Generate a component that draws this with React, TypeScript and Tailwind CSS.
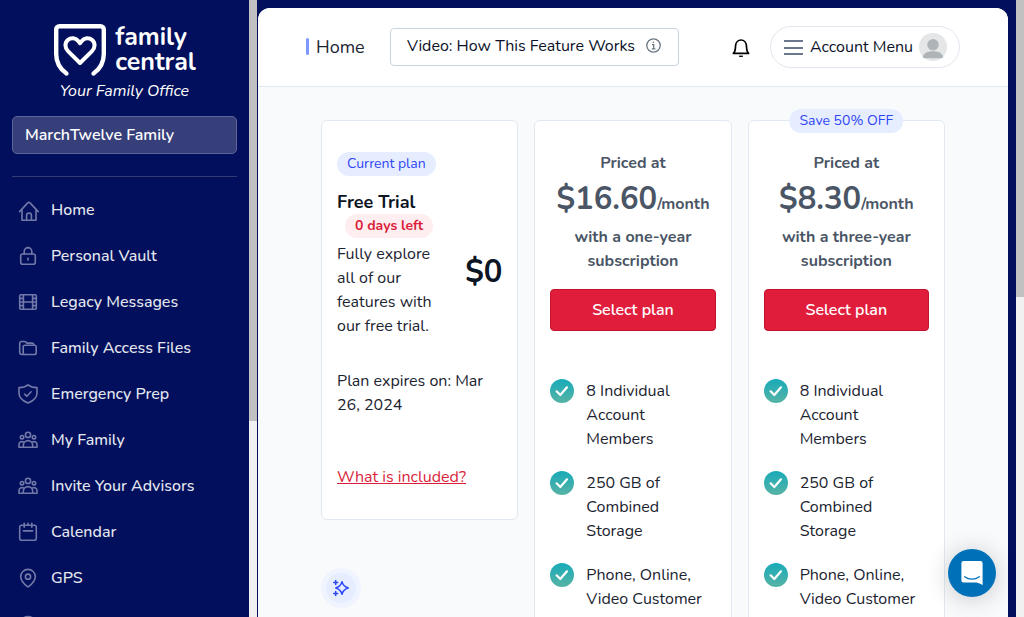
import type { ReactNode } from "react";

const navIcons: Record<string, ReactNode> = {
  home: (
    <>
      <path d="M1.6 11.6 10 2.6a1.2 1.2 0 0 1 1.8 0l8.4 9" />
      <path d="M4 10v10.3h14V10" />
      <path d="M8.6 20v-4.6a2.4 2.4 0 0 1 4.8 0V20" />
    </>
  ),
  lock: (
    <>
      <rect x="2.7" y="8" width="14.6" height="10.3" rx="2" />
      <path d="M6.2 8V5.4a3.8 3.8 0 0 1 7.6 0V8" />
      <path d="M10 12.3v1.8" />
    </>
  ),
  film: (
    <>
      <rect x="1.7" y="2.7" width="16.6" height="14.6" rx="1.2" />
      <path d="M5.4 2.7v14.6M14.6 2.7v14.6M5.4 10h9.2M1.7 6.4h3.7M1.7 10h3.7M1.7 13.6h3.7M14.6 6.4h3.7M14.6 10h3.7M14.6 13.6h3.7" />
    </>
  ),
  folder: (
    <>
      <rect x="5.2" y="7.2" width="13" height="9.3" rx="1.8" />
      <path d="M5.4 16.5H3.6a1.9 1.9 0 0 1-1.9-1.9V5.2a1.7 1.7 0 0 1 1.7-1.7h3.2c.6 0 1 .2 1.4.6l.9 1h5.4c.9 0 1.5.6 1.7 1.9" />
    </>
  ),
  shield: (
    <>
      <path d="M10 .9c2.4 1.9 5.2 2.7 9 2.7v5.6c0 4.8-4 7.8-9 9.9-5-2.1-9-5.1-9-9.9V3.6c3.800 0 6.600-.8 9-2.700Z" />
      <path d="m6.600 10.200 2.300 2.100 4.200-4.500" />
    </>
  ),
  people: (
    <>
      <circle cx="10" cy="4.900" r="2.600" />
      <circle cx="4" cy="7.200" r="1.700" />
      <circle cx="16" cy="7.200" r="1.700" />
      <path d="M5.300 17.200v-1.900a4.700 4.700 0 0 1 9.400 0v1.900Z" />
      <path d="M5.300 17.200H1v-2.600c0-2 1.800-3.500 4.700-2.700M14.700 17.200H19v-2.600c0-2-1.800-3.500-4.700-2.700" />
    </>
  ),
  calendar: (
    <>
      <rect x="1.700" y="3.300" width="16.600" height="15" rx="2" />
      <path d="M6.200 1.300v4M13.800 1.300v4M10 1.300v2M5.400 8.900h9.200" />
    </>
  ),
  pin: (
    <>
      <path d="M10 18.900c-1.800-1.300-7.300-5.100-7.300-10.200a7.300 7.300 0 0 1 14.600 0c0 5.100-5.500 8.900-7.300 10.200Z" />
      <circle cx="10" cy="8.700" r="2.600" />
    </>
  ),
  clock: <circle cx="10" cy="10.500" r="8" />,
};

const navItems = [
  { label: "Home", icon: "home" },
  { label: "Personal Vault", icon: "lock" },
  { label: "Legacy Messages", icon: "film" },
  { label: "Family Access Files", icon: "folder" },
  { label: "Emergency Prep", icon: "shield" },
  { label: "My Family", icon: "people" },
  { label: "Invite Your Advisors", icon: "people" },
  { label: "Calendar", icon: "calendar" },
  { label: "GPS", icon: "pin" },
  { label: "", icon: "clock" },
];

const features = [
  "8 Individual Account Members",
  "250 GB of Combined Storage",
  "Phone, Online, Video Customer Support",
];

const plans = [
  { price: "$16.60", term: "with a one-year subscription", badge: "" },
  { price: "$8.30", term: "with a three-year subscription", badge: "Save 50% OFF" },
];

function Logo() {
  return (
    <div className="flex flex-col items-center pt-[23px] text-white">
      <div className="flex gap-2">
        <svg width="54" height="54" viewBox="0 0 54 54" fill="none" stroke="currentColor" strokeWidth="4.400" strokeLinecap="round" strokeLinejoin="round">
          <path d="M13.500 50.500C7 46 3.200 39.500 3.200 31V6.500a3.300 3.300 0 0 1 3.300-3.300h41a3.300 3.300 0 0 1 3.300 3.300V31c0 8.500-3.800 15-10.300 19.500" />
          <path d="M27 40 15.200 28.400c-3.700-3.700-3.500-8.600-.4-11.400 3.200-2.800 7.700-2.300 10.200.8l2 2.400 2-2.400c2.500-3.100 7-3.600 10.200-.8 3.100 2.800 3.300 7.700-.4 11.400Z" strokeWidth="4" />
        </svg>
        <div className="flex flex-col pt-[2px] text-[25px] leading-[25px] font-bold">
          <span>family</span>
          <span>central</span>
        </div>
      </div>
      <span className="mt-0.5 text-base leading-6 italic">Your Family Office</span>
    </div>
  );
}

function Sidebar() {
  return (
    <aside className="flex min-w-0 flex-1 flex-col overflow-hidden px-3">
      <Logo />
      <button type="button" className="mt-[13px] h-[38px] shrink-0 rounded-[5px] border border-[#5d6497] bg-[#373f7b] px-3 text-left text-base font-semibold text-white">
        MarchTwelve Family
      </button>
      <nav className="mt-[22px] border-t border-[#343c77] pt-[10px]">
        {navItems.map((item) => (
          <a key={item.label} href="#" aria-label={item.label || "More"} className="flex h-[46px] items-center gap-[13px] pl-1.5 text-base font-medium text-[#e4e7ef]">
            <svg className="size-5 shrink-0 overflow-visible text-[#7279a8]" viewBox="0 0 20 20" fill="none" stroke="currentColor" strokeWidth="1.600" strokeLinecap="round" strokeLinejoin="round">
              {navIcons[item.icon]}
            </svg>
            {item.label}
          </a>
        ))}
      </nav>
    </aside>
  );
}

function Header() {
  return (
    <header className="flex h-[79px] shrink-0 items-center border-b border-[#e2e8f0] bg-white pr-12 pb-px pl-12">
      <div className="flex items-center gap-[7px]">
        <span className="h-[17px] w-[3px] rounded-sm bg-[#7c98ff]" />
        <h1 className="w-[49px] text-lg leading-6 whitespace-nowrap text-[#1b2430]">Home</h1>
      </div>
      <button type="button" className="ml-[25px] flex h-[38px] w-[289px] items-center justify-between rounded border border-[#cbd3e1] pr-[17px] pb-0.5 pl-4 text-base whitespace-nowrap text-[#0a1128]">
        Video: How This Feature Works
        <svg className="size-[15px]" viewBox="0 0 15 15" fill="none" stroke="#6b7684" strokeWidth="1.300">
          <circle cx="7.500" cy="7.500" r="6.700" />
          <path d="M6 6.700h1.700v4M5.800 10.900h3.600" />
          <circle cx="7.300" cy="4.200" r=".5" fill="#6b7684" strokeWidth=".6" />
        </svg>
      </button>
      <button type="button" aria-label="Notifications" className="ml-auto">
        <svg className="h-5 w-[18px]" viewBox="0 0 18 20" fill="none" stroke="#000" strokeWidth="1.700" strokeLinejoin="round">
          <path d="M1.400 16.400c1.200-1 1.700-2.200 1.900-4.200l.3-3.900C3.900 5.300 6.100 3 9 3s5.100 2.300 5.400 5.300l.3 3.900c.2 2 .7 3.200 1.900 4.200Z" />
          <path d="M7.300 19.100c.8 1.300 2.600 1.300 3.400 0Z" fill="#000" strokeWidth="1" />
        </svg>
      </button>
      <button type="button" className="ml-5 flex h-[42px] w-[190px] items-center rounded-full border border-[#e2e6ef] pr-3 pl-[13px] text-base whitespace-nowrap text-[#0a1128]">
        <svg className="h-4 w-[19px]" viewBox="0 0 19 16" stroke="#6b778c" strokeWidth="2">
          <path d="M0 2h19M0 9h19M0 15h19" />
        </svg>
        <span className="ml-[7px]">Account Menu</span>
        <svg className="ml-auto size-7" viewBox="0 0 28 28">
          <circle cx="14" cy="14" r="14" fill="#e4e6e7" />
          <circle cx="14" cy="11.700" r="5.700" fill="#aeb4b7" />
          <path d="M3.800 24.200c.6-3.900 4.200-6 10.200-6s9.600 2.100 10.200 6c-1 .8-1.600 1-2.400 1H6.200c-.8 0-1.400-.2-2.400-1Z" fill="#aeb4b7" />
        </svg>
      </button>
    </header>
  );
}

function FreeTrialCard() {
  return (
    <section className="rounded-md border border-[#e2e8f0] bg-white px-[15px] pt-[31px] pb-[30px] text-base text-[#1b2430]">
      <span className="flex h-6 w-fit items-center rounded-full bg-[#e6edff] px-2.5 text-sm text-[#2f46f5]">Current plan</span>
      <div className="mt-[14px] flex items-center justify-between">
        <div className="w-[110px]">
          <h2 className="text-lg leading-6 font-bold text-[#0b1523]">Free Trial</h2>
          <span className="ml-2 flex h-6 w-fit items-center rounded-full bg-[#ffeef0] px-2.5 text-sm font-bold text-[#d91f3c]">0 days left</span>
          <p className="mt-1">Fully explore all of our features with our free trial.</p>
        </div>
        <span className="pt-4 text-[31px] leading-9 font-bold text-[#0b1523]">$0</span>
      </div>
      <p className="mt-[31px]">Plan expires on: Mar 26, 2024</p>
      <a href="#" className="mt-12 block text-[#d91f3c] underline">What is included?</a>
    </section>
  );
}

function CheckIcon() {
  return (
    <svg className="size-6 shrink-0" viewBox="0 0 24 24" fill="none">
      <defs>
        <linearGradient id="teal" x1="0" y1="0" x2="0" y2="1">
          <stop offset="0" stopColor="#18aab8" />
          <stop offset="1" stopColor="#57b3a6" />
        </linearGradient>
      </defs>
      <circle cx="12" cy="12" r="12" fill="url(#teal)" />
      <path d="m6.600 12.300 3.700 3.700 6.700-7.700" stroke="#fff" strokeWidth="2.200" strokeLinecap="round" strokeLinejoin="round" />
    </svg>
  );
}

function PlanCard({ price, term, badge }: { price: string; term: string; badge: string }) {
  return (
    <section className="relative rounded-md border border-[#e2e8f0] bg-white px-[15px] pt-[30px] pb-8">
      {badge && (
        <span className="absolute -top-3 left-1/2 flex h-6 -translate-x-1/2 items-center rounded-full bg-[#e6edff] px-2.5 text-sm whitespace-nowrap text-[#2f46f5]">
          {badge}
        </span>
      )}
      <div className="text-center text-base font-bold text-[#4a5565]">
        <p>Priced at</p>
        <p className="text-[31px] leading-[48px] whitespace-nowrap">
          {price}
          <span className="text-base leading-6">/month</span>
        </p>
        <p className="mt-0.5">{term}</p>
      </div>
      <button type="button" className="mt-4 h-[42px] w-full rounded border border-[#c3142f] bg-[#e11d3c] text-base font-semibold text-white">
        Select plan
      </button>
      <ul className="mt-12 flex flex-col gap-5">
        {features.map((feature) => (
          <li key={feature} className="flex gap-3 text-base text-[#1b2430]">
            <CheckIcon />
            <span>{feature}</span>
          </li>
        ))}
      </ul>
    </section>
  );
}

export default function App() {
  return (
    <div className="flex h-screen overflow-hidden bg-[#020f5c] font-['Nunito','Lato',sans-serif]">
      <div className="flex w-[257px] shrink-0">
        <Sidebar />
        <div className="w-2 bg-[#f1f1f1]">
          <div className="h-[421px] bg-[#c1c1c1]" />
        </div>
      </div>
      <main className="mt-2 mr-2 ml-px flex min-w-0 flex-1 flex-col overflow-hidden rounded-t-xl bg-[#f8fafc]">
        <Header />
        <div className="grid grid-cols-3 gap-4 px-[63px] pt-[33px]">
          <div>
            <FreeTrialCard />
            <div className="mt-12 flex size-10 items-center justify-center rounded-full bg-[#f0f4ff]">
              <div className="flex size-[30px] items-center justify-center rounded-full bg-[#e6edff]">
                <svg className="size-[18px]" viewBox="0 0 18 18" fill="none" stroke="#2f46f5" strokeWidth="1.500" strokeLinecap="round" strokeLinejoin="round">
                  <path d="M10 2.800c1 3.700 2.500 5.200 6.300 6.200-3.800 1-5.300 2.500-6.300 6.200C9 11.500 7.500 10 3.700 9 7.500 8 9 6.500 10 2.800Z" />
                  <path d="M3.700 1.500v4M1.700 3.500h4M3.700 12.500v4M1.700 14.500h4" />
                </svg>
              </div>
            </div>
          </div>
          {plans.map((plan) => (
            <PlanCard key={plan.price} {...plan} />
          ))}
        </div>
      </main>
      <div className="w-2 bg-[#f1f1f1]">
        <div className="h-[297px] bg-[#c1c1c1]" />
      </div>
      <button type="button" aria-label="Open chat" className="fixed right-7 bottom-5 flex size-12 items-center justify-center rounded-full bg-[#0071b9] shadow-[0_2px_24px_rgba(0,0,0,0.2)]">
        <svg className="h-6 w-[22px]" viewBox="0 0 22 24" fill="none">
          <path d="M2.600 0h16.800A2.200 2.200 0 0 1 21.600 2.200V24c-2-1.300-4-2.200-6-2.600H2.600A2.200 2.200 0 0 1 .4 19.200V2.200A2.200 2.200 0 0 1 2.600 0Z" fill="#fff" />
          <path d="M3.700 15.700c4.300 3.300 10.300 3.300 14.600 0" stroke="#0071b9" strokeWidth="1.300" strokeLinecap="round" />
        </svg>
      </button>
    </div>
  );
}
